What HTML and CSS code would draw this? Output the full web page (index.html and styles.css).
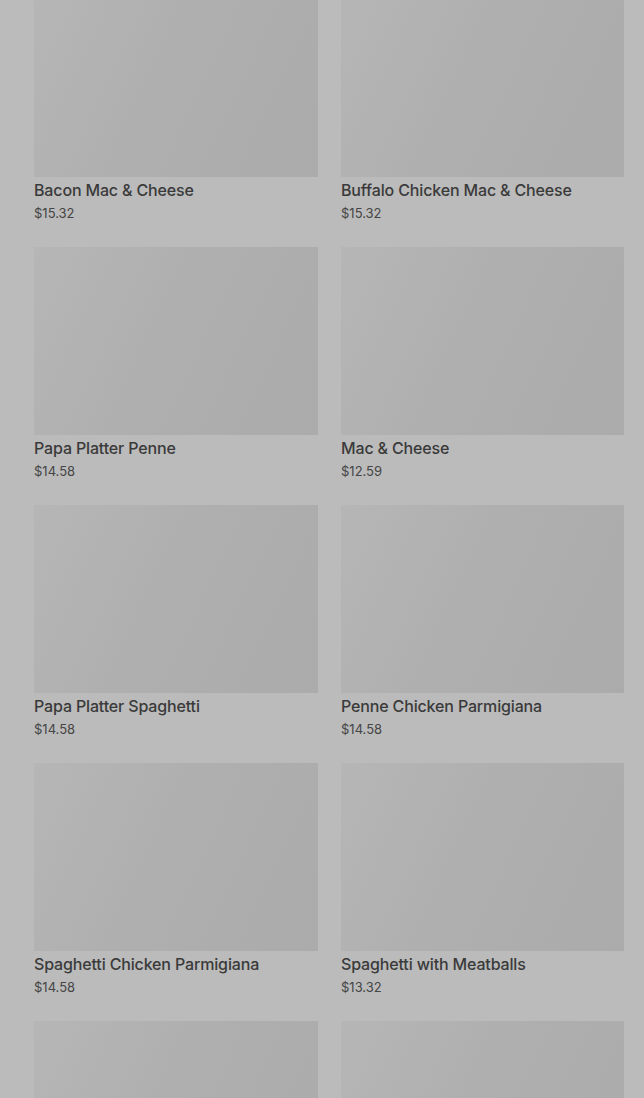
FILE: index.html
```html
<!DOCTYPE html>
<html lang="en">
<head>
  <meta charset="UTF-8" />
  <meta name="viewport" content="width=device-width, initial-scale=1.0"/>
  <title>Menu</title>
  <link rel="stylesheet" href="styles.css">
</head>
<body>
  <div class="menu-grid">
    <div class="item">
      <div class="item-img"></div>
      <div class="item-name">Bacon Mac &amp; Cheese</div>
      <div class="item-price">$15.32</div>
    </div>
    <div class="item">
      <div class="item-img"></div>
      <div class="item-name">Buffalo Chicken Mac &amp; Cheese</div>
      <div class="item-price">$15.32</div>
    </div>
    <div class="item">
      <div class="item-img"></div>
      <div class="item-name">Papa Platter Penne</div>
      <div class="item-price">$14.58</div>
    </div>
    <div class="item">
      <div class="item-img"></div>
      <div class="item-name">Mac &amp; Cheese</div>
      <div class="item-price">$12.59</div>
    </div>
    <div class="item">
      <div class="item-img"></div>
      <div class="item-name">Papa Platter Spaghetti</div>
      <div class="item-price">$14.58</div>
    </div>
    <div class="item">
      <div class="item-img"></div>
      <div class="item-name">Penne Chicken Parmigiana</div>
      <div class="item-price">$14.58</div>
    </div>
    <div class="item">
      <div class="item-img"></div>
      <div class="item-name">Spaghetti Chicken Parmigiana</div>
      <div class="item-price">$14.58</div>
    </div>
    <div class="item">
      <div class="item-img"></div>
      <div class="item-name">Spaghetti with Meatballs</div>
      <div class="item-price">$13.32</div>
    </div>
    <div class="item">
      <div class="item-img"></div>
    </div>
    <div class="item">
      <div class="item-img"></div>
    </div>
  </div>
</body>
</html>
```

FILE: styles.css
```css
html, body {
  height: 100%;
}
body {
  background-color: #bbbbbb;
  color: #383838;
  font-family: Inter, 'Noto Sans', sans-serif;
  margin: 0;
  overflow: hidden;
}
.menu-grid {
  display: grid;
  grid-template-columns: 284px 283px;
  column-gap: 23px;
  row-gap: 25px;
  margin-top: -11px;
  padding-left: 34px;
}
.item-img {
  height: 188px;
  background: linear-gradient(115deg, #b6b6b6 0%, #afafaf 45%, #ababab 100%);
}
.item-name {
  margin-top: 3px;
  font-size: 16px;
  line-height: 20px;
  font-weight: 500;
  letter-spacing: -0.15px;
  color: #3a3a3a;
}
.item-price {
  margin-top: 4px;
  font-size: 13px;
  line-height: 18px;
  color: #454545;
}
```
